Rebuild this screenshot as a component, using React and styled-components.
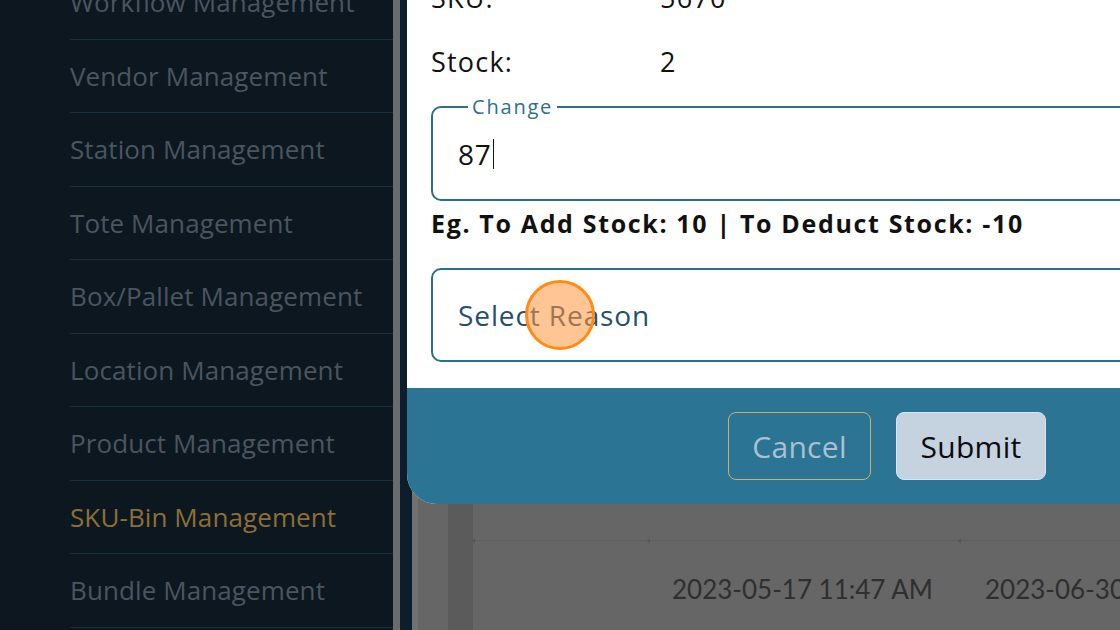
import React from 'react'
import styled, { createGlobalStyle } from 'styled-components'

const GlobalStyle = createGlobalStyle`
  html, body {
    margin: 0;
    padding: 0;
    background: #0d1720;
    font-family: "Open Sans", "Liberation Sans", sans-serif;
  }
  * { box-sizing: border-box; }
`

const menu = [
  'Workflow Management',
  'Vendor Management',
  'Station Management',
  'Tote Management',
  'Box/Pallet Management',
  'Location Management',
  'Product Management',
  'SKU-Bin Management',
  'Bundle Management',
]

const Page = styled.div`
  display: flex;
  width: 1120px;
  height: 630px;
  overflow: hidden;
`

const Sidebar = styled.aside`
  display: flex;
  width: 400px;
  flex-shrink: 0;
  background: #0d1720;
`

const Menu = styled.ul`
  list-style: none;
  margin: -34px 0 0;
  padding: 0 0 0 70px;
  width: 393px;
`

const MenuItem = styled.li`
  height: 73.5px;
  display: flex;
  align-items: center;
  border-bottom: 1.5px solid #19303f;
  font-size: 26px;
  letter-spacing: 0.1px;
  white-space: nowrap;
  color: ${p => (p.$active ? '#8c6f37' : '#4a5560')};
`

const ScrollThumb = styled.div`
  width: 7px;
  background: #6b6b6b;
`

const Main = styled.main`
  position: relative;
  flex: 1;
  display: flex;
`

const Gutter = styled.div`
  width: 12px;
  background: #0c1d2c;
`

const Backdrop = styled.div`
  flex: 1;
  display: flex;
  background: #666666;
`

const Stripe = styled.div`
  width: ${p => p.$w}px;
  background: ${p => p.$c};
`

const Table = styled.div`
  flex: 1;
  padding-top: 485px;
`

const HeadRow = styled.div`
  display: flex;
  height: 56px;
  border-bottom: 1px solid #5d5d5d;
`

const HeadCell = styled.div`
  width: ${p => p.$w}px;
  flex-shrink: 0;
  position: relative;
  &::before {
    content: '';
    position: absolute;
    left: -1px;
    bottom: -4px;
    border: 3px solid transparent;
    border-right-color: #575757;
    border-left: 0;
  }
`

const BodyRow = styled.div`
  display: flex;
  height: 96px;
  align-items: center;
`

const Cell = styled.div`
  width: ${p => p.$w}px;
  flex-shrink: 0;
  padding-left: ${p => p.$pl || 0}px;
  font-family: Lato, "Open Sans", sans-serif;
  font-size: 26px;
  color: #2f2f2f;
  white-space: nowrap;
`

const Modal = styled.div`
  position: absolute;
  left: 7px;
  top: -35px;
  width: 780px;
  background: #ffffff;
  border-radius: 0 0 30px 30px;
  overflow: hidden;
`

const Body = styled.div`
  padding: 0 24px 26px;
`

const InfoRow = styled.div`
  display: grid;
  grid-template-columns: 229px 1fr;
  align-items: center;
  height: 64px;
  font-size: 27px;
  letter-spacing: 1.2px;
  color: #111;
`

const Field = styled.fieldset`
  margin: 4px 0 0;
  padding: 21px 25px 29px;
  border: 2px solid #2c6f8c;
  border-radius: 10px;
  min-width: 0;
`

const Legend = styled.legend`
  margin-left: 10px;
  padding: 0 4px;
  font-size: 20px;
  line-height: 20px;
  letter-spacing: 1.8px;
  color: #2c6f8c;
`

const Value = styled.div`
  height: 32px;
  display: flex;
  align-items: center;
  font-size: 28px;
  letter-spacing: 0.8px;
  color: #111;
`

const Caret = styled.span`
  display: inline-block;
  width: 1.5px;
  height: 30px;
  margin-left: 1px;
  background: #111;
`

const Hint = styled.p`
  margin: 7px 0 0;
  line-height: 30px;
  font-size: 25px;
  font-weight: 700;
  letter-spacing: 1.65px;
  color: #111;
  white-space: nowrap;
`

const Select = styled.div`
  position: relative;
  margin-top: 30px;
  height: 94px;
  display: flex;
  align-items: center;
  padding-left: 25px;
  border: 2px solid #2c6f8c;
  border-radius: 10px;
  font-size: 28px;
  letter-spacing: 0.9px;
  color: #24506f;
`

const Click = styled.span`
  position: absolute;
  left: 92px;
  top: 10px;
  width: 70px;
  height: 70px;
  border-radius: 50%;
  background: rgba(255, 150, 60, 0.55);
  border: 3px solid #ff8a14;
`

const Footer = styled.div`
  display: flex;
  justify-content: flex-end;
  gap: 25px;
  height: 116px;
  padding: 24px 141px 24px 0;
  background: #2c7494;
`

const Button = styled.button`
  width: ${p => p.$w}px;
  height: 68px;
  border-radius: 8px;
  font-family: "Open Sans", sans-serif;
  font-size: 30px;
  letter-spacing: 0.3px;
  cursor: pointer;
  border: ${p => (p.$primary ? '1px solid #dbe4ee' : '1.5px solid #c8b26a')};
  background: ${p => (p.$primary ? '#c5d3e1' : 'transparent')};
  color: ${p => (p.$primary ? '#0b0b0b' : '#a9c1d1')};
`

export default function App() {
  return (
    <Page>
      <GlobalStyle />
      <Sidebar>
        <Menu>
          {menu.map(m => (
            <MenuItem key={m} $active={m === 'SKU-Bin Management'}>{m}</MenuItem>
          ))}
        </Menu>
        <ScrollThumb />
      </Sidebar>
      <Main>
        <Gutter />
        <Backdrop>
          <Stripe $w={6} $c="#717171" />
          <Stripe $w={30} $c="#666666" />
          <Stripe $w={25} $c="#5b5b5b" />
          <Table>
            <HeadRow>
              <HeadCell $w={175} />
              <HeadCell $w={311} />
              <HeadCell $w={300} />
            </HeadRow>
            <BodyRow>
              <Cell $w={175} />
              <Cell $w={311} $pl={24}>2023-05-17 11:47 AM</Cell>
              <Cell $w={300} $pl={26}>2023-06-30 10:12 AM</Cell>
            </BodyRow>
          </Table>
        </Backdrop>
        <Modal>
          <Body>
            <InfoRow><span>SKU:</span><span>5670</span></InfoRow>
            <InfoRow><span>Stock:</span><span>2</span></InfoRow>
            <Field>
              <Legend>Change</Legend>
              <Value>87<Caret /></Value>
            </Field>
            <Hint>Eg. To Add Stock: 10 | To Deduct Stock: -10</Hint>
            <Select>
              Select Reason
              <Click />
            </Select>
          </Body>
          <Footer>
            <Button $w={143}>Cancel</Button>
            <Button $w={150} $primary>Submit</Button>
          </Footer>
        </Modal>
      </Main>
    </Page>
  )
}
